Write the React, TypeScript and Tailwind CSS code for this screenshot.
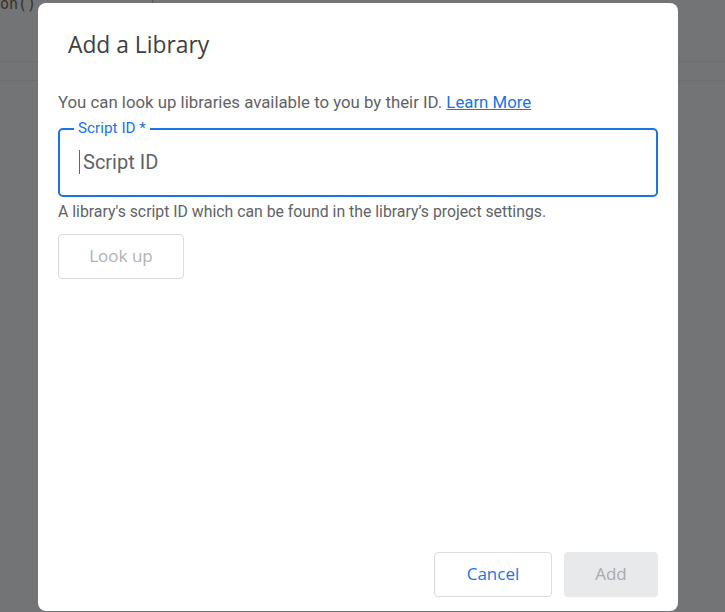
import React from 'react';

const App: React.FC = () => {
  return (
    <div
      className="relative w-[725px] h-[612px] overflow-hidden bg-[#737475]"
      style={{ fontFamily: 'Roboto, "Noto Sans", Arial, sans-serif' }}
    >
      {/* dimmed editor behind the dialog */}
      <div className="absolute inset-0">
        <div className="h-[20px] leading-[16px] text-[15px] text-[#3a3225] -mt-[4px]" style={{ fontFamily: '"DejaVu Sans Mono", monospace' }}>
          on()
        </div>
        <div className="absolute left-[152px] top-0 w-px h-[10px] bg-[#5a5a5a]" />
        <div className="absolute left-0 right-0 top-[61px] h-px bg-[#6c6d6e]" />
        <div className="absolute left-0 right-0 top-[80px] h-px bg-[#6c6d6e]" />
      </div>

      {/* dialog */}
      <div className="absolute left-[38px] top-[3px] w-[640px] h-[608px] bg-white rounded-[8px] flex flex-col">
        <div className="pl-[30px] pt-[28px] text-[22.8px] leading-[28px] text-[#3c4043]" style={{ fontFamily: '"Open Sans", Roboto, sans-serif' }}>
          Add a Library
        </div>

        <div className="px-[20px] flex-1 flex flex-col">
          <p className="mt-[33px] text-[16.8px] leading-[20px] text-[#5f6368] whitespace-nowrap">
            You can look up libraries available to you by their ID.{' '}
            <span className="text-[#1a73e8] underline">Learn More</span>
          </p>

          {/* outlined field */}
          <div className="relative mt-[16px] h-[69px] w-[600px] border-2 border-[#1a73e8] rounded-[5px]">
            <span className="absolute -top-[11px] left-[14px] px-[4px] bg-white text-[15.3px] leading-[18px] text-[#1a73e8]">
              Script ID *
            </span>
            <div className="flex items-center h-full pl-[19px] pb-[2px]">
              <span className="w-px h-[24px] bg-[#1a73e8]" />
              <span className="ml-[3px] text-[20px] text-[#5f6368]">Script ID</span>
            </div>
          </div>

          <p className="mt-[5px] text-[15.8px] leading-[20px] text-[#5f6368] whitespace-nowrap">
            A library's script ID which can be found in the library’s project settings.
          </p>

          <button className="mt-[12px] w-[126px] h-[45px] pb-[2px] border border-[#dadce0] rounded-[4px] text-[17px] text-[#b1b3b5] font-medium" style={{ fontFamily: '"Open Sans", Roboto, sans-serif' }}>
            Look up
          </button>

          <div className="flex-1" />

          <div className="flex justify-end gap-[12px] pb-[14px]">
            <button className="w-[118px] h-[45px] pb-[2px] border border-[#dadce0] rounded-[4px] text-[17px] text-[#1a73e8] font-medium" style={{ fontFamily: '"Open Sans", Roboto, sans-serif' }}>
              Cancel
            </button>
            <button className="w-[94px] h-[45px] pb-[2px] bg-[#e8e9ea] rounded-[4px] text-[17px] text-[#a9abad] font-medium" style={{ fontFamily: '"Open Sans", Roboto, sans-serif' }}>
              Add
            </button>
          </div>
        </div>
      </div>
    </div>
  );
};

export default App;
